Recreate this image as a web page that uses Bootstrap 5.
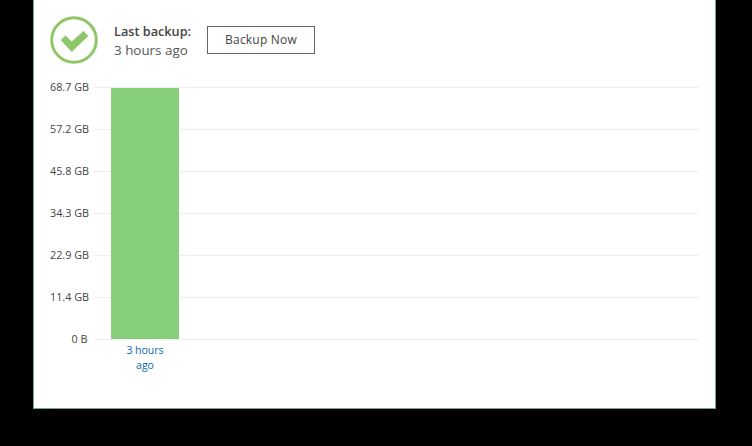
<!DOCTYPE html>
<html lang="en">
<head>
<meta charset="utf-8">
<title>Backup</title>
<link rel="stylesheet" href="https://cdn.jsdelivr.net/npm/bootstrap@5.3.0/dist/css/bootstrap.min.css">
<style>
html, body { background: #000; height: 446px; overflow: hidden; }
body { font-family: "Open Sans", "Noto Sans", sans-serif; color: #444; }
.win { width: 683px; height: 409px; margin-left: 33px; background: #fff; border: solid #6fa898; border-width: 0 1px 1px 1px; padding: 16px 16px 0 16px; }
.head { height: 48px; margin-bottom: 23px; }
.status-icon { width: 48px; height: 48px; flex: none; }
.info { margin-left: 16px; width: 93px; padding-top: 2px; line-height: 19px; }
.info-t { font-weight: 600; font-size: 12.7px; color: #444; }
.info-s { font-size: 13.4px; color: #555; }
.btn-backup { width: 108px; height: 28px; padding: 0; border: 1px solid #666; border-radius: 0; background: #fff; font-size: 12px; line-height: 26px; color: #444; letter-spacing: .2px; }
.plot { position: relative; width: 649px; }
.tick { height: 42px; }
.tick-l { width: 37.5px; flex: none; text-align: right; font-size: 10.8px; line-height: 14px; margin-top: -7px; color: #444; white-space: nowrap; }
.tick-r { flex: 1; margin-left: 6.5px; border-top: 1px solid #eee; }
.bar { position: absolute; left: 61px; top: 1px; width: 68px; height: 251px; background: #88cf7b; }
.xlab { margin-left: 57px; width: 76px; margin-top: -38px; text-align: center; font-size: 10.5px; line-height: 14.5px; color: #0a68ad; }
</style>
</head>
<body>
<div class="win d-flex flex-column">
  <div class="head d-flex align-items-center">
    <svg class="status-icon" viewBox="0 0 48 48" aria-hidden="true">
      <circle cx="24" cy="24" r="22.3" fill="none" stroke="#8fc768" stroke-width="3"/>
      <path d="M10.7 24 L15.5 19.5 L21.7 25.5 L33.5 15 L38.3 20 L21.7 36 Z" fill="#8fc768"/>
    </svg>
    <div class="info">
      <div class="info-t">Last backup:</div>
      <div class="info-s">3 hours ago</div>
    </div>
    <button type="button" class="btn btn-backup">Backup Now</button>
  </div>
  <div class="plot">
    <div class="tick d-flex"><div class="tick-l">68.7 GB</div><div class="tick-r"></div></div>
    <div class="tick d-flex"><div class="tick-l">57.2 GB</div><div class="tick-r"></div></div>
    <div class="tick d-flex"><div class="tick-l">45.8 GB</div><div class="tick-r"></div></div>
    <div class="tick d-flex"><div class="tick-l">34.3 GB</div><div class="tick-r"></div></div>
    <div class="tick d-flex"><div class="tick-l">22.9 GB</div><div class="tick-r"></div></div>
    <div class="tick d-flex"><div class="tick-l">11.4 GB</div><div class="tick-r"></div></div>
    <div class="tick d-flex"><div class="tick-l">0 B</div><div class="tick-r"></div></div>
    <div class="bar"></div>
    <div class="xlab">3 hours<br>ago</div>
  </div>
</div>
<script src="https://cdn.jsdelivr.net/npm/bootstrap@5.3.0/dist/js/bootstrap.bundle.min.js"></script>
</body>
</html>
